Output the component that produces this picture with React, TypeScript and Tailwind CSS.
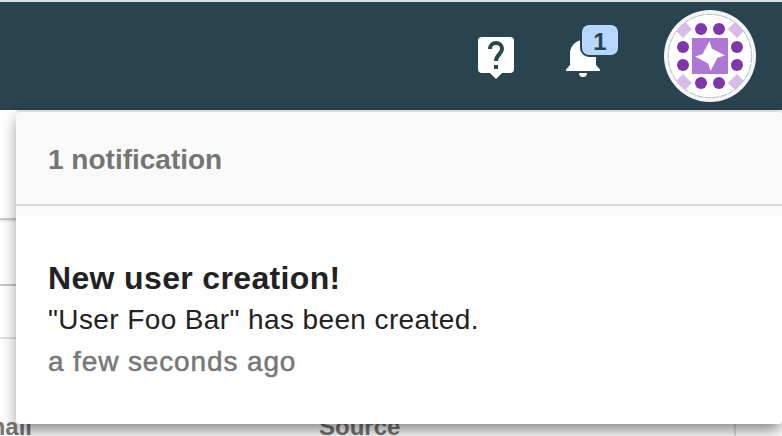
const dots = [[701, 29], [719, 29], [683, 47], [737, 47], [683, 65], [737, 65], [701, 83], [719, 83]];
const diamonds = [[683, 29], [737, 29], [683, 83], [737, 83]];

function HelpIcon() {
  return (
    <svg className="block h-[42px] w-9" viewBox="0 0 36 42">
      <path fill="#fff" d="M4 0h28a4 4 0 0 1 4 4v28a4 4 0 0 1-4 4h-8l-6 6-6-6H4a4 4 0 0 1-4-4V4a4 4 0 0 1 4-4Z" />
      <path fill="none" stroke="#29444e" strokeWidth="4" d="M12 12a6 6 0 1 1 12 0c0 5-6 6-6 12" />
      <path fill="#29444e" d="M16 28h4v4h-4z" />
    </svg>
  );
}

function BellIcon() {
  return (
    <svg className="block h-[38px] w-[34px]" viewBox="0 0 34 38">
      <path fill="#fff" d="M13 34h8a4 4 0 0 1-8 0ZM4 26V15C4 8 8 3 14.500 1.200V0h5v1.200C26 3 30 8 30 15v11l4 4.500V32H0v-1.500Z" />
    </svg>
  );
}

function Avatar() {
  return (
    <svg className="block size-[92px]" viewBox="664 10 92 92">
      <defs>
        <clipPath id="face"><circle cx="710" cy="56" r="42" /></clipPath>
      </defs>
      <circle cx="710" cy="56" r="46" fill="#f5f5f5" />
      <circle cx="710" cy="56" r="41.700" fill="#fff" stroke="#98a5aa" strokeWidth="0.7" strokeDasharray="7 1" />
      <g clipPath="url(#face)">
        {diamonds.map(([x, y]) => (
          <path key={`${x}-${y}`} fill="#d7bce8" d={`M${x} ${y - 9}l9 9-9 9-9-9Z`} />
        ))}
      </g>
      {dots.map(([x, y]) => <circle key={`${x}-${y}`} cx={x} cy={y} r="6" fill="#7e36aa" />)}
      <path fill="#af76d5" d="M692 38h36v36h-36z" />
      <path fill="#fff" d="M709.500 41L711.800 48.500 725 55.500 717.500 57.800 710.500 71 708.200 63.500 695 56.500 702.500 54.200Z" />
    </svg>
  );
}

export default function App() {
  return (
    <div className="relative h-[436px] w-[782px] overflow-hidden bg-white font-['Liberation_Sans',Arial,sans-serif]">
      <header className="flex h-[110px] items-start border-t-2 border-[#dfe0e1] bg-[#29444e] pl-[478px]">
        <div className="mt-[35px]"><HelpIcon /></div>
        <div className="relative mt-[37px] ml-[52px]">
          <BellIcon />
          <span className="absolute -top-4 left-[14px] flex h-[34px] w-10 items-center justify-center rounded-[9px] border-2 border-[#29444e] bg-[#b6d7ff] pt-1 text-2xl font-bold text-[#29444e]">1</span>
        </div>
        <div className="mt-2 ml-16"><Avatar /></div>
      </header>
      <main className="relative flex h-[326px] flex-col">
        <div className="h-[110px] shrink-0 border-b-2 border-[#c8c8c8] shadow-sm" />
        <div className="h-[66px] shrink-0 border-b-2 border-[#c8c8c8]" />
        <div className="h-[53px] shrink-0 border-b-2 border-[#dce2e6]" />
        <div className="relative min-h-0 flex-1 text-2xl font-bold text-[#777]">
          <div className="flex pt-[74px] leading-7">
            <span className="-ml-8 w-[351px]">Email</span>
            <span>Source</span>
          </div>
          <div className="absolute top-0 left-[734px] h-full w-0.5 bg-[#dce2e6]" />
        </div>
      </main>
      <section className="absolute top-[110px] left-4 h-[314px] w-[766px] rounded bg-white shadow-[0_10px_10px_-6px_rgba(0,0,0,0.2),0_8px_16px_0px_rgba(0,0,0,0.24),0_4px_16px_0px_rgba(0,0,0,0.12)]">
        <div className="h-[106px] rounded-t border-t-2 border-[#dcdcdc] bg-[#fafafa]">
          <div className="flex h-[94px] items-center border-b-2 border-[#d8d8d8] pl-8 text-[28px] font-bold text-[#757575]">
            <span className="pt-1">1 notification</span>
          </div>
        </div>
        <div className="pt-[42px] pl-8 text-[28px] text-[#222]">
          <h1 className="text-[32px] leading-10 font-bold tracking-[0.35px]">New user creation!</h1>
          <p className="pt-px leading-[42px] tracking-[0.39px]">"User Foo Bar" has been created.</p>
          <p className="leading-[42px] tracking-[0.87px] text-[#777] [-webkit-text-stroke:0.5px_#777]">a few seconds ago</p>
        </div>
      </section>
    </div>
  );
}
